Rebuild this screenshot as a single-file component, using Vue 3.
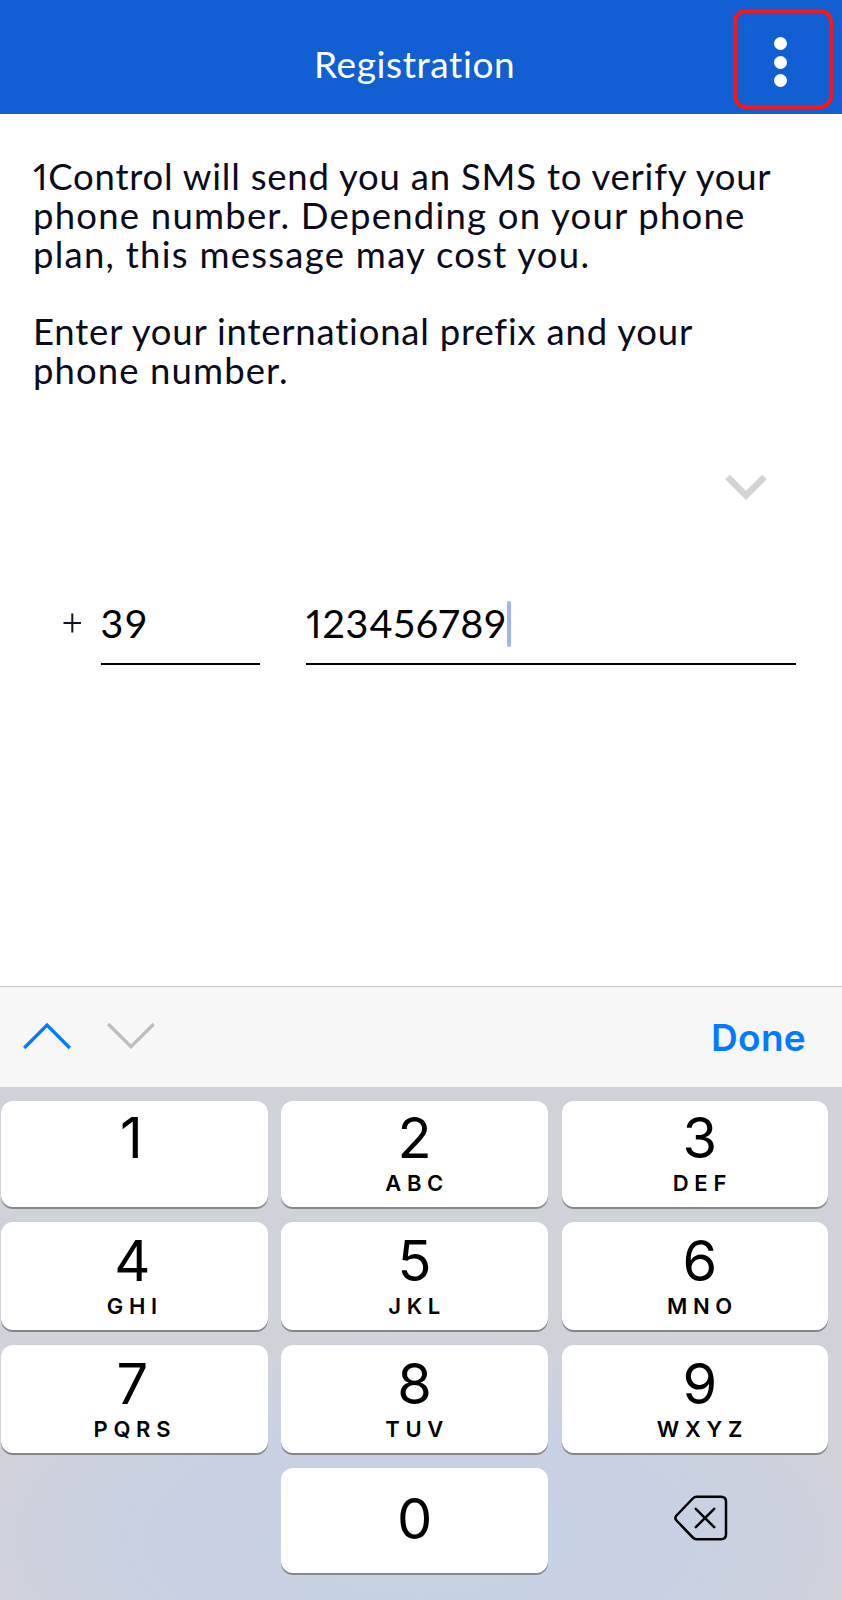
<template>
  <div class="screen">
    <header class="header">
      <h1 class="header__title">Registration</h1>
      <button class="header__menu" aria-label="Menu">
        <span v-for="dot in 3" :key="dot" class="header__dot"></span>
      </button>
    </header>

    <main class="content">
      <p class="intro">
        <span
          v-for="(line, index) in introLines"
          :key="index"
          class="intro__line"
          :style="{ letterSpacing: line.spacing + 'px' }"
        >{{ line.text }}</span>
      </p>

      <div class="country">
        <svg width="42" height="28" viewBox="0 0 42 28">
          <path d="M2.5 3 L21 21.5 L39.5 3" fill="none" stroke="#d3d3d3" stroke-width="6.5" />
        </svg>
      </div>

      <div class="phone">
        <svg class="phone__plus" width="19" height="20" viewBox="0 0 19 20">
          <path d="M0.5 10 H18 M9.3 0.5 V19.5" stroke="#111122" stroke-width="2" />
        </svg>
        <div class="field field--prefix">
          <span>{{ prefix }}</span>
        </div>
        <div class="field field--number">
          <span>{{ number }}</span>
          <i class="field__caret"></i>
        </div>
      </div>
    </main>

    <div class="toolbar">
      <svg class="toolbar__arrow" width="48" height="28" viewBox="0 0 48 28">
        <path d="M1.2 26 L24 3 L46.8 26" fill="none" stroke="#007aff" stroke-width="3.3" />
      </svg>
      <svg class="toolbar__arrow" width="48" height="28" viewBox="0 0 48 28">
        <path d="M1.2 2 L24 24.7 L46.8 2" fill="none" stroke="#bebebe" stroke-width="3.3" />
      </svg>
      <button class="toolbar__done">Done</button>
    </div>

    <div class="keypad">
      <div v-for="(row, rowIndex) in rows" :key="rowIndex" class="keypad__row">
        <button
          v-for="key in row"
          :key="key.digit"
          class="key"
          :class="{ 'key--one': key.digit === '1' }"
          @click="press(key.digit)"
        >
          <span class="key__digit">{{ key.digit }}</span>
          <span class="key__letters">{{ key.letters }}</span>
        </button>
      </div>
      <div class="keypad__row keypad__row--last">
        <span></span>
        <button class="key" @click="press('0')">
          <span class="key__digit">0</span>
        </button>
        <button class="key-delete" aria-label="Delete" @click="erase">
          <svg width="54" height="46" viewBox="0 0 54 46">
            <path
              d="M22.5 1.8 H47 Q52 1.8 52 6.8 V39.2 Q52 44.2 47 44.2 H22.5 Q20.5 44.2 18.8 42.5 L2.5 25.5 Q0.2 23 2.5 20.5 L18.8 3.5 Q20.5 1.8 22.5 1.8 Z"
              fill="none" stroke="#000" stroke-width="2.5" stroke-linejoin="round"
            />
            <path d="M21.8 13.8 L40.2 32.2 M40.2 13.8 L21.8 32.2" stroke="#000" stroke-width="2.5" stroke-linecap="round" />
          </svg>
        </button>
      </div>
    </div>
  </div>
</template>

<script setup>
import { ref } from 'vue';

const prefix = ref('39');
const number = ref('123456789');

const introLines = [
  { text: '1Control will send you an SMS to verify your', spacing: 0.78 },
  { text: 'phone number. Depending on your phone', spacing: 1.22 },
  { text: 'plan, this message may cost you.', spacing: 1.26 },
  { text: '', spacing: 0 },
  { text: 'Enter your international prefix and your', spacing: 0.8 },
  { text: 'phone number.', spacing: 1.1 }
];

const rows = [
  [
    { digit: '1', letters: '' },
    { digit: '2', letters: 'ABC' },
    { digit: '3', letters: 'DEF' }
  ],
  [
    { digit: '4', letters: 'GHI' },
    { digit: '5', letters: 'JKL' },
    { digit: '6', letters: 'MNO' }
  ],
  [
    { digit: '7', letters: 'PQRS' },
    { digit: '8', letters: 'TUV' },
    { digit: '9', letters: 'WXYZ' }
  ]
];

function press(digit) {
  number.value += digit;
}

function erase() {
  number.value = number.value.slice(0, -1);
}
</script>

<style>
body {
  margin: 0;
}
</style>

<style scoped>
.screen {
  display: flex;
  flex-direction: column;
  width: 842px;
  height: 1600px;
  overflow: hidden;
  background-color: #fff;
  font-family: Lato, sans-serif;
  font-variant-numeric: proportional-nums;
}

button {
  padding: 0;
  border: none;
  background: none;
  font: inherit;
}

.header {
  display: grid;
  grid-template-columns: 733px 100px;
  height: 113.5px;
  background-color: #115fd3;
}

.header__title {
  margin: 0;
  padding: 39.5px 0 0 314px;
  color: #fff;
  font-size: 37px;
  font-weight: 400;
  line-height: 48px;
  letter-spacing: 0.6px;
}

.header__menu {
  display: flex;
  flex-direction: column;
  align-items: center;
  gap: 5.8px;
  box-sizing: border-box;
  height: 100px;
  margin-top: 9.4px;
  padding: 23.5px 5px 0 0;
  border: 4px solid #f5191c;
  border-radius: 13px;
}

.header__dot {
  width: 13px;
  height: 13px;
  border-radius: 50%;
  background-color: #fff;
}

.content {
  display: flex;
  flex-direction: column;
  height: 872.5px;
}

.intro {
  display: flex;
  flex-direction: column;
  margin: 0;
  padding: 43.5px 0 0 33px;
  color: #0b0b1c;
  font-size: 36.5px;
  line-height: 38.8px;
}

.intro__line {
  height: 38.8px;
  white-space: nowrap;
}

.country {
  display: flex;
  justify-content: flex-end;
  padding: 84px 75px 0 0;
}

.phone {
  display: flex;
  align-items: flex-start;
  padding: 93px 46px 0 63px;
  color: #000;
  font-size: 39.5px;
}

.phone__plus {
  margin: 18px 18.5px 0 0;
}

.field {
  display: flex;
  box-sizing: border-box;
  height: 70px;
  border-bottom: 2px solid #000;
  line-height: 55px;
  letter-spacing: 0.8px;
}

.field--prefix {
  width: 159.5px;
  margin-right: 46px;
  letter-spacing: 2px;
}

.field--number {
  flex: 1;
}

.field__caret {
  width: 4px;
  height: 46px;
  margin-top: 6px;
  border-radius: 2px;
  background-color: #a2b4ef;
}

.toolbar {
  display: flex;
  align-items: center;
  box-sizing: border-box;
  height: 101px;
  padding: 0 36px 0 23px;
  border-top: 1px solid #c6c7c9;
  background-color: #f7f7f7;
}

.toolbar__arrow {
  margin-right: 36px;
  margin-bottom: 2px;
}

.toolbar__done {
  margin-left: auto;
  color: #007aff;
  font-family: Inter, sans-serif;
  font-size: 37px;
  font-weight: 600;
  letter-spacing: 0.3px;
}

.keypad {
  flex: 1;
  display: flex;
  flex-direction: column;
  gap: 15.5px;
  padding: 14px 14px 0 1px;
  background:
    radial-gradient(ellipse 440px 200px at 50% 88%, #c6d2e5 0%, #c8d1e3 60%, rgba(208, 210, 218, 0) 100%),
    #d0d2da;
  color: #000;
  font-family: Inter, sans-serif;
}

.keypad__row {
  display: grid;
  grid-template-columns: repeat(3, 266.7px);
  column-gap: 13.6px;
  height: 107.5px;
}

.keypad__row:first-child {
  height: 105.5px;
}

.keypad__row--last {
  height: 105px;
}

.key {
  display: flex;
  flex-direction: column;
  align-items: center;
  box-sizing: border-box;
  padding-top: 10.5px;
  border-radius: 12px;
  background-color: #fff;
  box-shadow: 0 2px 0 #85878c;
}

.keypad__row:first-child .key {
  padding-top: 8.5px;
}

.keypad__row--last .key {
  padding-top: 22.5px;
}

.key:first-child {
  padding-right: 4px;
}

.key:nth-child(3) {
  padding-left: 10px;
}

.keypad__row .key--one {
  padding-right: 6px;
}

.key__digit {
  font-size: 56px;
  line-height: 56px;
}

.key__letters {
  margin-top: 5px;
  margin-right: -5px;
  font-size: 22px;
  font-weight: 600;
  line-height: 24px;
  letter-spacing: 5.7px;
}

.key-delete {
  display: flex;
  align-items: flex-start;
  padding: 26.5px 0 0 112.5px;
}
</style>
